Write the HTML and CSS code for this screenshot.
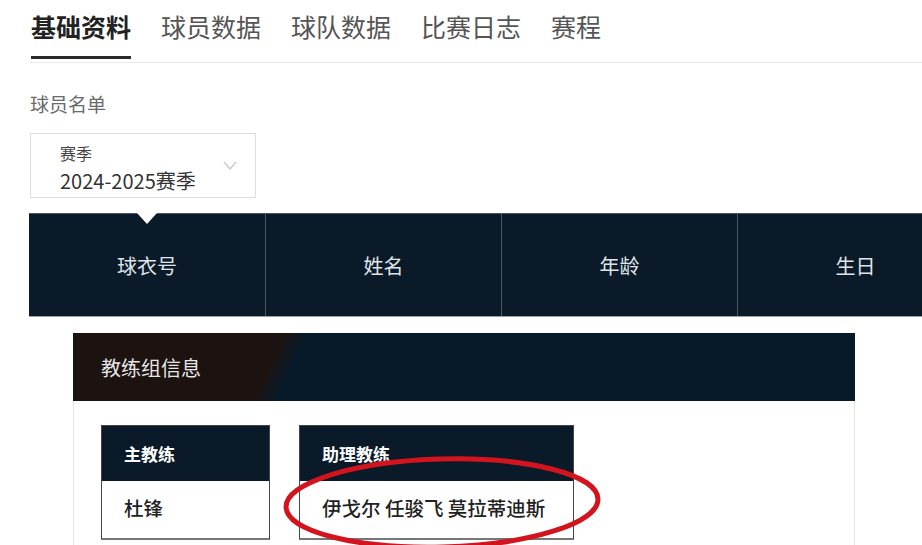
FILE: index.html
```html
<!DOCTYPE html>
<html lang="zh-CN">
<head>
<meta charset="utf-8">
<title>球员名单</title>
<link rel="stylesheet" href="styles.css">
</head>
<body>
<div class="page">
  <nav class="tabs">
    <a class="tab active">基础资料</a>
    <a class="tab">球员数据</a>
    <a class="tab">球队数据</a>
    <a class="tab">比赛日志</a>
    <a class="tab">赛程</a>
  </nav>

  <div class="section-title">球员名单</div>

  <div class="select">
    <div class="select-text">
      <div class="select-label">赛季</div>
      <div class="select-value">2024-2025赛季</div>
    </div>
    <svg class="chevron" width="14" height="9" viewBox="0 0 14 9"><path d="M1 1 L7 8 L13 1" fill="none" stroke="#c8c8c8" stroke-width="1.2"/></svg>
  </div>

  <div class="roster">
    <div class="thead">
      <div class="th first">球衣号<span class="caret"></span></div>
      <div class="th">姓名</div>
      <div class="th">年龄</div>
      <div class="th">生日</div>
    </div>

    <div class="coach-box">
      <div class="coach-head">教练组信息</div>
      <div class="coach-body">
        <div class="card card-main">
          <div class="card-head">主教练</div>
          <div class="card-body">杜锋</div>
        </div>
        <div class="card card-assist">
          <div class="card-head">助理教练</div>
          <div class="card-body">伊戈尔 任骏飞 莫拉蒂迪斯</div>
          <svg class="mark" width="330" height="100" viewBox="0 0 330 100"><ellipse cx="164" cy="49" rx="156" ry="44" fill="none" stroke="#d3141e" stroke-width="5" transform="rotate(-1.5 164 49)"/></svg>
        </div>
      </div>
    </div>
  </div>
</div>
</body>
</html>
```

FILE: styles.css
```css
* { box-sizing: border-box; }
html, body {
  margin: 0;
  padding: 0;
  background: #fff;
  overflow: hidden;
}
body {
  font-family: "Noto Sans CJK SC", "Noto Sans", sans-serif;
  color: #333;
}
.page {
  width: 922px;
  height: 545px;
  overflow: hidden;
  padding-left: 30px;
}

/* tabs */
.tabs {
  display: flex;
  gap: 30px;
  padding-bottom: 3px;
  border-bottom: 1px solid #e8e8e8;
  margin-right: -30px;
}
.tab {
  display: block;
  font-size: 25px;
  line-height: 32px;
  padding: 10px 0 14px;
  color: #555;
  border-bottom: 3px solid transparent;
}
.tab.active {
  color: #222;
  font-weight: 700;
  border-bottom-color: #2a2a2a;
  margin-left: 1px;
}

/* title */
.section-title {
  margin-top: 28px;
  font-size: 19px;
  line-height: 26px;
  color: #6a6a6a;
}

/* select */
.select {
  margin-top: 16px;
  width: 226px;
  height: 65px;
  border: 1px solid #dedede;
  display: flex;
  align-items: center;
  padding: 8px 18px 3px 29px;
  justify-content: space-between;
}
.select-text {
  align-self: flex-start;
}
.select-label {
  font-size: 16px;
  line-height: 22px;
  color: #444;
}
.select-value {
  margin-top: 4px;
  font-size: 20px;
  line-height: 26px;
  color: #333;
}
.chevron {
  margin-top: -6px;
}

/* roster table */
.roster {
  margin-top: 15px;
  margin-left: -1px;
}
.thead {
  display: flex;
  width: 1000px;
  height: 104px;
  background: #0b1a28;
  border-top: 1px solid #4b5965;
  border-bottom: 1px solid #9aa3aa;
}
.th {
  position: relative;
  width: 236px;
  flex: none;
  display: flex;
  align-items: center;
  justify-content: center;
  font-size: 20px;
  color: #dfe4e8;
  border-right: 1px solid #4a5866;
}
.th.first { width: 237px; }
.caret {
  position: absolute;
  top: -1px;
  left: 50%;
  margin-left: -10px;
  width: 0;
  height: 0;
  border-left: 10px solid transparent;
  border-right: 10px solid transparent;
  border-top: 11px solid #fff;
}

/* coach box */
.coach-box {
  margin: 16px 0 0 44px;
  width: 782px;
}
.coach-head {
  height: 68px;
  display: flex;
  align-items: center;
  padding-left: 28px;
  font-size: 20px;
  color: #e6e6e6;
  background: linear-gradient(115deg, #1c1311 0, #1c1311 192px, #061a2a 214px, #061a2a 100%);
}
.coach-body {
  display: flex;
  gap: 29px;
  padding: 24px 0 30px 27px;
  border-left: 1px solid #e4e4e4;
  border-right: 1px solid #e4e4e4;
}
.card {
  position: relative;
  border: 1px solid #444;
  border-bottom: 2px solid #777;
  display: flex;
  flex-direction: column;
}
.card-main { width: 169px; }
.card-assist { width: 275px; }
.card-head {
  height: 55px;
  background: #0b1a28;
  color: #fff;
  font-size: 17px;
  font-weight: 700;
  display: flex;
  align-items: center;
  padding-left: 22px;
}
.card-body {
  height: 57px;
  display: flex;
  align-items: center;
  padding: 0 0 4px 22px;
  font-size: 19.5px;
  font-weight: 500;
  color: #222;
  white-space: nowrap;
}
.mark {
  position: absolute;
  left: -22px;
  top: 28px;
  pointer-events: none;
}
```
